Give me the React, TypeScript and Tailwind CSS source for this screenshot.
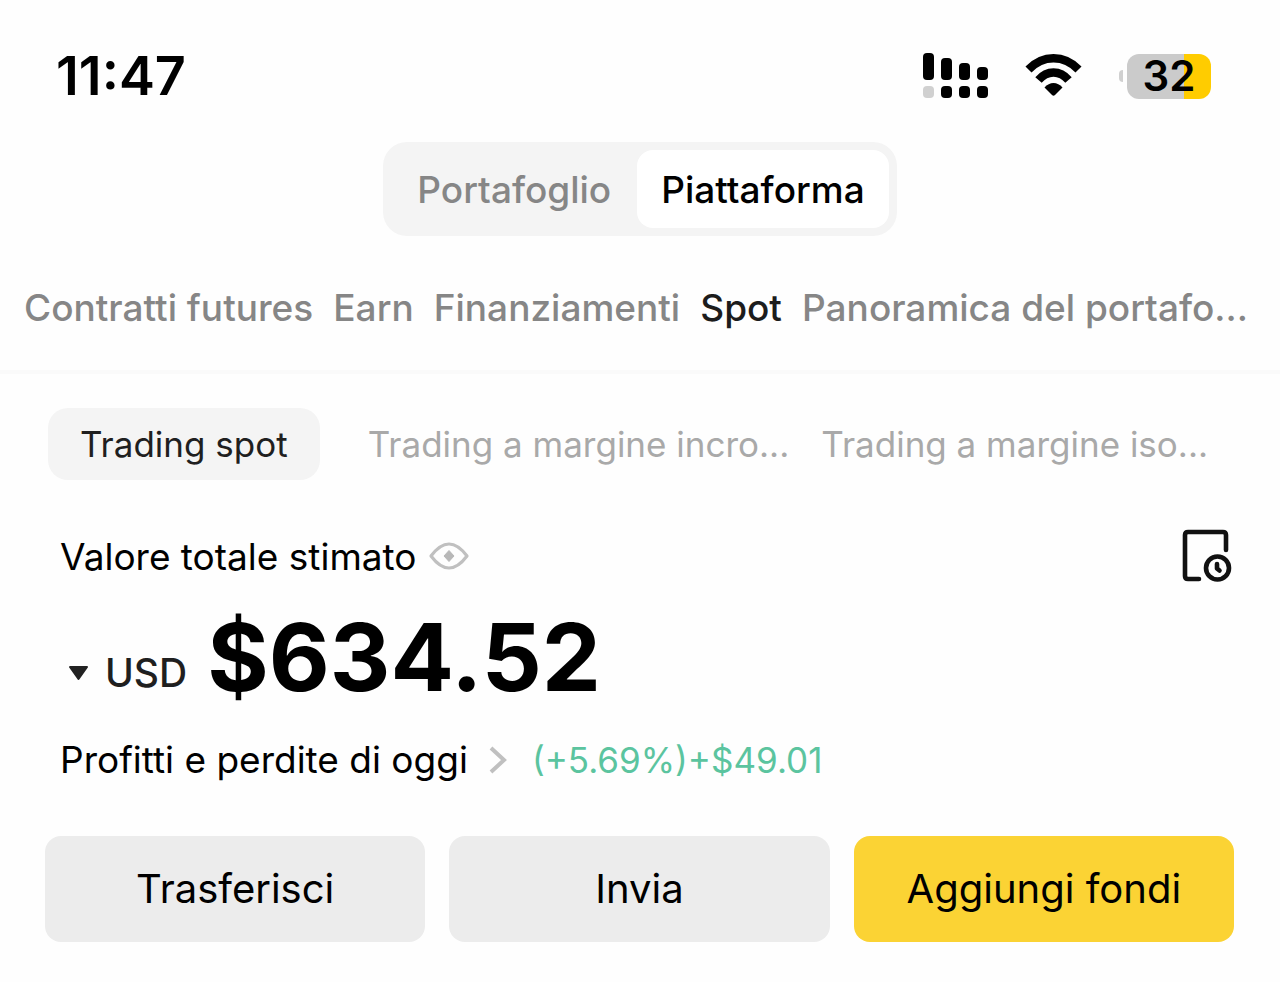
const accountTabs = ["Contratti futures", "Earn", "Finanziamenti", "Spot", "Panoramica del portafo..."]

const actions = [
  { name: "Trasferisci", primary: false },
  { name: "Invia", primary: false },
  { name: "Aggiungi fondi", primary: true },
]

function SignalIcon() {
  return (
    <svg width="66" height="46" viewBox="0 0 66 46" aria-hidden="true">
      <rect x="0" y="0" width="11" height="27" rx="4" />
      <rect x="18" y="5" width="11" height="22" rx="4" />
      <rect x="36" y="10" width="11" height="17" rx="4" />
      <rect x="54" y="14" width="11" height="13" rx="4" />
      <rect x="0" y="33" width="11" height="12" rx="4" fill="#d0d0d0" />
      <rect x="18" y="33" width="11" height="12" rx="4" />
      <rect x="36" y="33" width="11" height="12" rx="4" />
      <rect x="54" y="33" width="11" height="12" rx="4" />
    </svg>
  )
}

function WifiIcon() {
  return (
    <svg width="58" height="46" viewBox="0 0 58 46" aria-hidden="true">
      <g fill="none" stroke="#000" strokeWidth="8.4">
        <path d="M3.500 16.500C18 1.500 39 1.500 53.500 16.500" />
        <path d="M13.500 27C22 17 35 17 43.500 27" />
      </g>
      <path d="M19.500 34.500C24.500 28.500 32.500 28.500 37.500 34.500L30 42Q28.500 43.500 27 42Z" />
    </svg>
  )
}

function BatteryIcon() {
  return (
    <div className="flex items-center gap-1">
      <span className="h-3 w-1 rounded-l-full bg-[#d0d0d0]" />
      <span className="flex h-[45px] w-[84px] items-center justify-center rounded-xl bg-linear-to-r from-[#cbcbcb] from-68% to-[#ffcc00] to-68% text-[42px] leading-none font-semibold">
        32
      </span>
    </div>
  )
}

function EyeIcon() {
  return (
    <svg width="40" height="28" viewBox="0 0 40 28" aria-hidden="true">
      <path
        d="M2 14C8 6 14 2 20 2S32 6 38 14C32 22 26 26 20 26S8 22 2 14Z"
        fill="none"
        stroke="#c0c0c0"
        strokeWidth="3.2"
        strokeLinejoin="round"
      />
      <path d="M20 8.500L25 14L20 19.500L15 14Z" fill="#b8b8b8" stroke="#b8b8b8" strokeLinejoin="round" />
    </svg>
  )
}

function HistoryIcon() {
  return (
    <svg width="50" height="54" viewBox="0 0 50 54" fill="none" stroke="#111" strokeWidth="4.6" strokeLinecap="round" aria-hidden="true">
      <path d="M44 21V6Q44 3 41 3H6Q3 3 3 6V47Q3 50 6 50H17" />
      <circle cx="35.500" cy="39" r="11.500" />
      <path d="M35 35V39.500L37.500 41.500" strokeLinejoin="round" />
    </svg>
  )
}

export default function App() {
  return (
    <main className="min-h-screen bg-[#fefefe] pt-10 pb-8 font-['Inter',sans-serif] text-black">
      <header className="flex h-[72px] items-center justify-between pr-[69px] pl-14">
        <time className="text-[54px] leading-none font-semibold">11:47</time>
        <div className="flex items-center gap-9">
          <SignalIcon />
          <WifiIcon />
          <BatteryIcon />
        </div>
      </header>

      <div className="mx-auto mt-[30px] flex h-[94px] w-fit items-center rounded-3xl bg-[#f4f4f4] p-2 text-[37px] leading-none font-medium">
        <button type="button" className="h-full px-[26px] text-[#868686]">
          Portafoglio
        </button>
        <button type="button" className="h-full rounded-2xl bg-white px-6">
          Piattaforma
        </button>
      </div>

      <nav className="mt-[42px] flex justify-between border-b-4 border-[#fafafa] pr-8 pb-8 pl-6 text-[37px] leading-[60px] font-medium whitespace-nowrap">
        {accountTabs.map((tab) => (
          <a key={tab} href="#" className={tab === "Spot" ? "text-[#1c1c1c]" : "text-[#868686]"}>
            {tab}
          </a>
        ))}
      </nav>

      <div className="mt-[34px] flex items-center pl-12 text-[35px] leading-none whitespace-nowrap text-[#a9a9a9]">
        <button type="button" className="h-[72px] rounded-[20px] bg-[#f4f4f4] px-8 text-[#1f1f1f]">
          Trading spot
        </button>
        <button type="button" className="ml-12">
          Trading a margine incro...
        </button>
        <button type="button" className="ml-8">
          Trading a margine iso...
        </button>
      </div>

      <section className="mt-[46px] pr-12 pl-15">
        <div className="flex h-[60px] items-center">
          <h1 className="text-[37px] leading-none">Valore totale stimato</h1>
          <button type="button" aria-label="Nascondi saldo" className="ml-3">
            <EyeIcon />
          </button>
          <button type="button" aria-label="Cronologia" className="ml-auto">
            <HistoryIcon />
          </button>
        </div>

        <div className="mt-[22px] flex items-end">
          <button type="button" className="flex items-center gap-4 pb-3.5 pl-2 text-[39px] leading-none font-medium text-[#1f1f1f]">
            <svg width="21" height="17" viewBox="0 0 21 17" aria-hidden="true">
              <path d="M2 3H19L10.500 15Z" fill="#222" stroke="#222" strokeWidth="2" strokeLinejoin="round" />
            </svg>
            USD
          </button>
          <strong className="ml-5 text-[94px] leading-[98px] font-bold">$634.52</strong>
        </div>

        <a href="#" className="mt-6 flex items-center text-[37px] leading-[60px]">
          Profitti e perdite di oggi
          <svg width="20" height="32" viewBox="0 0 20 32" fill="none" className="ml-5" aria-hidden="true">
            <path d="M3 4L16 16L3 28" stroke="#c0c0c0" strokeWidth="4" />
          </svg>
          <span className="ml-6 text-[35px] text-[#5bc49f]">(+5.69%)+$49.01</span>
        </a>
      </section>

      <div className="mt-[46px] grid grid-cols-3 gap-6 pr-[46px] pl-[45px]">
        {actions.map((action) => (
          <button
            key={action.name}
            type="button"
            className={`h-[106px] rounded-2xl text-[40px] leading-none ${
              action.primary ? "bg-[#fbd334]" : "bg-[#ececec]"
            }`}
          >
            {action.name}
          </button>
        ))}
      </div>
    </main>
  )
}
